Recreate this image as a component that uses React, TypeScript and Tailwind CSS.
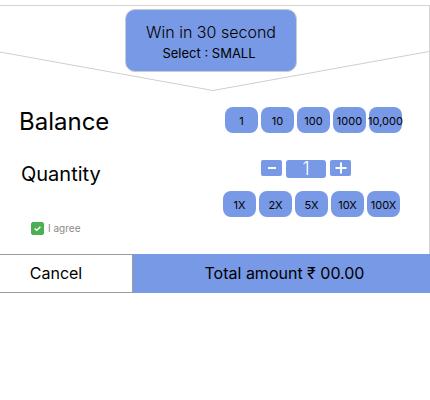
import { useState } from "react";

const amounts = ["1", "10", "100", "1000", "10,000"];
const multipliers = ["1X", "2X", "5X", "10X", "100X"];

function Chip({ label }: { label: string }) {
  return (
    <button
      type="button"
      className="flex h-[26px] w-[33px] items-center justify-center whitespace-nowrap rounded-lg bg-[#7899e5] pt-px text-[11px] leading-4"
    >
      {label}
    </button>
  );
}

function StepIcon({ plus }: { plus?: boolean }) {
  return (
    <svg viewBox="0 0 12 12" className="h-3 w-3" stroke="white" strokeWidth="2" aria-hidden="true">
      {plus ? <path d="M0.5 6H11.5M6 0.5V11.5" /> : <path d="M2 6H10" />}
    </svg>
  );
}

export default function App() {
  const [agreed, setAgreed] = useState(true);

  return (
    <div className="bg-white pt-[5px] font-['Inter',sans-serif] text-black">
      <main className="border-t border-[#d4d4d4]">
        <div className="border-r border-[#d4d4d4]">
          <header className="relative flex h-[86px] items-start justify-center pt-[3px] pr-[7px]">
            <svg
              className="absolute inset-0 h-full w-full"
              viewBox="0 0 429 86"
              preserveAspectRatio="none"
              fill="none"
              stroke="#cfcfcf"
              aria-hidden="true"
            >
              <path d="M0 46L213 84.5L429 45.5" />
            </svg>
            <div className="relative flex h-[63px] w-[172px] flex-col items-center rounded-[10px] border border-[#c9cbd3] bg-[#7899e5] pt-2.5">
              <h1 className="text-base leading-6 font-light">Win in 30 second</h1>
              <p className="pr-1 text-[13px] leading-[18px]">Select : SMALL</p>
            </div>
          </header>

          <div className="flex justify-between pt-[15px] pr-[27px] pl-[19px]">
            <section>
              <h2 className="text-2xl leading-[30px]">Balance</h2>
              <h2 className="mt-[23px] pl-0.5 text-xl leading-7">Quantity</h2>
              <label className="mt-8 flex h-4 items-center gap-1 pl-3 text-[10px] leading-4 text-[#8a8a8a]">
                <span className="relative flex h-[13px] w-[13px]">
                  <input
                    type="checkbox"
                    checked={agreed}
                    onChange={(e) => setAgreed(e.target.checked)}
                    className="h-[13px] w-[13px] appearance-none rounded-[2px] border border-[#4caf50] checked:bg-[#4caf50]"
                  />
                  {agreed && (
                    <svg
                      viewBox="0 0 12 12"
                      className="pointer-events-none absolute inset-0 h-full w-full"
                      fill="none"
                      stroke="white"
                      strokeWidth="1.3"
                      aria-hidden="true"
                    >
                      <path d="M3.4 5.9L5.3 7.7L8.7 4.3" />
                    </svg>
                  )}
                </span>
                I agree
              </label>
            </section>

            <section className="flex flex-col items-end">
              <div className="flex gap-[3px]">
                {amounts.map((a) => (
                  <Chip key={a} label={a} />
                ))}
              </div>
              <div className="mt-[27px] mr-[51px] flex items-start gap-1">
                <button type="button" aria-label="Decrease" className="flex h-4 w-[21px] items-center justify-center rounded-[2px] bg-[#7899e5]">
                  <StepIcon />
                </button>
                <output className="h-[18px] w-10 rounded-[3px] bg-[#7899e5] text-center text-lg leading-[18px] font-light text-white">
                  1
                </output>
                <button type="button" aria-label="Increase" className="flex h-4 w-[21px] items-center justify-center rounded-[2px] bg-[#7899e5]">
                  <StepIcon plus />
                </button>
              </div>
              <div className="mt-[13px] mr-0.5 flex gap-[3px]">
                {multipliers.map((m) => (
                  <Chip key={m} label={m} />
                ))}
              </div>
            </section>
          </div>
          <div className="h-[18px]" />
        </div>

        <footer className="flex h-[39px] text-base">
          <button type="button" className="w-[133px] border-y border-r border-[#9b9b9b] pr-5 pb-0.5">
            Cancel
          </button>
          <button type="button" className="flex-1 bg-[#7899e5] pb-0.5 pl-1.5">
            Total amount ₹ 00.00
          </button>
        </footer>
      </main>
    </div>
  );
}
